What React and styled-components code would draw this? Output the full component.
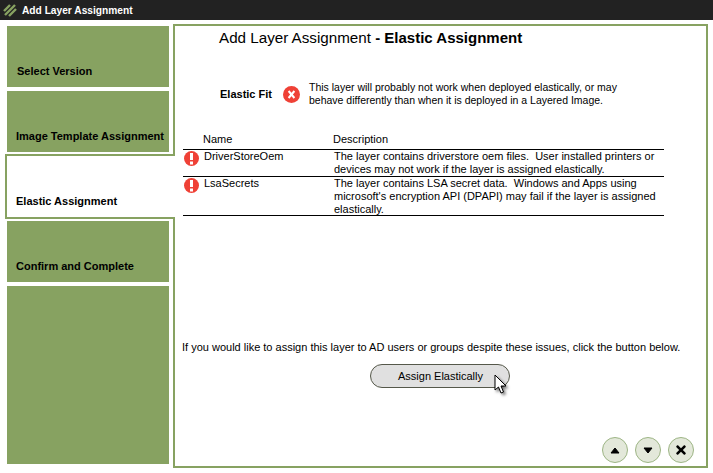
import React from 'react';
import styled, { createGlobalStyle } from 'styled-components';
import { FaTimes } from 'react-icons/fa';

const GlobalStyle = createGlobalStyle`
  html, body {
    margin: 0;
    padding: 0;
    background: #fff;
    font-family: "Liberation Sans", Arial, sans-serif;
    color: #000;
  }
`;

const Window = styled.div`
  width: 713px;
  height: 473px;
  overflow: hidden;
  display: flex;
  flex-direction: column;
`;

const TitleBar = styled.div`
  height: 20px;
  background: #222222;
  display: flex;
  align-items: center;
  gap: 5px;
  padding-left: 3px;
  color: #fff;
  font-size: 10.2px;
  font-weight: 700;
`;

const Body = styled.div`
  display: flex;
  align-items: flex-start;
  padding: 4px 0 0 5px;
`;

const Steps = styled.div`
  width: 170px;
  margin-right: -2px;
  padding-top: 2px;
  display: flex;
  flex-direction: column;
  position: relative;
  z-index: 1;
`;

const Step = styled.div`
  box-sizing: border-box;
  height: ${props => props.$height}px;
  margin: ${props => props.$top}px 6px 0 2px;
  background: #87a261;
  font-size: 11px;
  font-weight: 700;
  padding: 0 0 10px ${props => props.$left || 9}px;
  display: flex;
  align-items: flex-end;
`;

const ActiveStep = styled.div`
  box-sizing: border-box;
  height: 65px;
  margin-top: 2px;
  background: #fff;
  border: 2px solid #87a261;
  border-right: none;
  font-size: 11px;
  font-weight: 700;
  padding: 0 0 10px 9px;
  display: flex;
  align-items: flex-end;
`;

const Panel = styled.div`
  box-sizing: border-box;
  width: 535px;
  height: 444px;
  border: 2px solid #87a261;
  display: flex;
  flex-direction: column;
  padding-left: 8px;
  font-size: 11px;
`;

const Heading = styled.h1`
  margin: 2px 0 0 36px;
  font-size: 15.2px;
  line-height: 20px;
  font-weight: 400;
  b {
    font-size: 15px;
    font-weight: 700;
  }
`;

const FitRow = styled.div`
  display: flex;
  align-items: center;
  margin: 33px 0 0 37px;
`;

const FitLabel = styled.div`
  width: 63px;
  font-size: 11px;
  font-weight: 700;
`;

const FitText = styled.div`
  margin-left: 9px;
  font-size: 10.5px;
  line-height: 13px;
`;

const Issues = styled.div`
  width: 481px;
  margin-top: 23px;
`;

const IssueHeader = styled.div`
  display: flex;
  height: 17px;
  padding-bottom: 2px;
  align-items: center;
  padding-left: 20px;
  border-bottom: 1px solid #000;
`;

const NameCol = styled.div`
  width: 130px;
  flex: none;
`;

const IssueRow = styled.div`
  box-sizing: border-box;
  height: ${props => props.$height}px;
  display: flex;
  padding-left: 1px;
  border-bottom: 1px solid #000;
  line-height: 12.75px;
`;

const IssueIcon = styled.div`
  width: 20px;
  flex: none;
  padding-top: 1px;
  height: 15px;
`;

const IssueLine = styled.div`
  white-space: pre;
`;

const Prompt = styled.div`
  margin: 125px 0 0 -1px;
  line-height: 13px;
`;

const ButtonRow = styled.div`
  margin: 10px 0 0 187px;
  position: relative;
  width: 140px;
`;

const AssignButton = styled.button`
  box-sizing: border-box;
  width: 140px;
  height: 24px;
  border: 1px solid #55584a;
  border-radius: 12px;
  background: #e0e0e0;
  font: 400 11px "Liberation Sans", Arial, sans-serif;
  color: #000;
  padding: 0 0 0 1px;
`;

const Cursor = styled.svg`
  position: absolute;
  left: 124px;
  top: 10px;
  overflow: visible;
  filter: drop-shadow(2px 2px 1.5px rgba(0, 0, 0, 0.55));
`;

const Footer = styled.div`
  display: flex;
  gap: 7px;
  margin: 49px 0 0 419px;
`;

const RoundButton = styled.div`
  box-sizing: border-box;
  width: 26px;
  height: 26px;
  border-radius: 50%;
  border: 1px solid #9db585;
  background: #e3e8da;
  display: flex;
  align-items: center;
  justify-content: center;
  color: #000;
`;

const Triangle = ({ down }) => (
  <svg width="10" height="7" viewBox="0 0 10 7">
    <path d={down ? 'M1 1h8L5 6z' : 'M5 1l4 5H1z'} fill="#000" strokeLinejoin="round" stroke="#000" />
  </svg>
);

const AlertIcon = () => (
  <svg width="15" height="15" viewBox="0 0 15 15">
    <circle cx="7.5" cy="7.5" r="7.5" fill="#ef4136" />
    <rect x="6" y="2" width="3" height="7" fill="#fff" />
    <rect x="6" y="10.5" width="3" height="3" fill="#fff" />
  </svg>
);

const FailIcon = () => (
  <svg width="17" height="17" viewBox="0 0 17 17">
    <circle cx="8.5" cy="8.5" r="8.5" fill="#ef4136" />
    <path d="M5.6 5l5.8 7M11.4 5l-5.8 7" stroke="#fff" strokeWidth="2" />
  </svg>
);

const LogoIcon = () => (
  <svg width="14" height="14" viewBox="0 0 14 14">
    <path d="M1 8l6-6M2 12L12 2M6 13l7-7" stroke="#87a261" strokeWidth="2.4" fill="none" />
  </svg>
);

const issues = [
  {
    name: 'DriverStoreOem',
    height: 27,
    text: ['The layer contains driverstore oem files.  User installed printers or', 'devices may not work if the layer is assigned elastically.'],
  },
  {
    name: 'LsaSecrets',
    height: 39,
    text: ['The layer contains LSA secret data.  Windows and Apps using', "microsoft's encryption API (DPAPI) may fail if the layer is assigned", 'elastically.'],
  },
];

const App = () => (
  <>
    <GlobalStyle />
    <Window>
      <TitleBar>
        <LogoIcon />
        Add Layer Assignment
      </TitleBar>
      <Body>
        <Steps>
          <Step $height={61} $top={0} $left={10}>Select Version</Step>
          <Step $height={61} $top={4}>Image Template Assignment</Step>
          <ActiveStep>Elastic Assignment</ActiveStep>
          <Step $height={61} $top={2}>Confirm and Complete</Step>
          <Step $height={178} $top={4} />
        </Steps>
        <Panel>
          <Heading>Add Layer Assignment <b>- Elastic Assignment</b></Heading>
          <FitRow>
            <FitLabel>Elastic Fit</FitLabel>
            <FailIcon />
            <FitText>
              This layer will probably not work when deployed elastically, or may<br />
              behave differently than when it is deployed in a Layered Image.
            </FitText>
          </FitRow>
          <Issues>
            <IssueHeader>
              <NameCol>Name</NameCol>
              <div>Description</div>
            </IssueHeader>
            {issues.map(issue => (
              <IssueRow key={issue.name} $height={issue.height}>
                <IssueIcon><AlertIcon /></IssueIcon>
                <NameCol>{issue.name}</NameCol>
                <div>
                  {issue.text.map(line => <IssueLine key={line}>{line}</IssueLine>)}
                </div>
              </IssueRow>
            ))}
          </Issues>
          <Prompt>If you would like to assign this layer to AD users or groups despite these issues, click the button below.</Prompt>
          <ButtonRow>
            <AssignButton>Assign Elastically</AssignButton>
            <Cursor width="18" height="23" viewBox="0 0 18 23">
              <path d="M1 1v15l3.5-3 2.5 6 2.5-1-2.5-6h5z" fill="#fff" stroke="#000" />
            </Cursor>
          </ButtonRow>
          <Footer>
            <RoundButton><Triangle /></RoundButton>
            <RoundButton><Triangle down /></RoundButton>
            <RoundButton><FaTimes size={14} /></RoundButton>
          </Footer>
        </Panel>
      </Body>
    </Window>
  </>
);

export default App;
